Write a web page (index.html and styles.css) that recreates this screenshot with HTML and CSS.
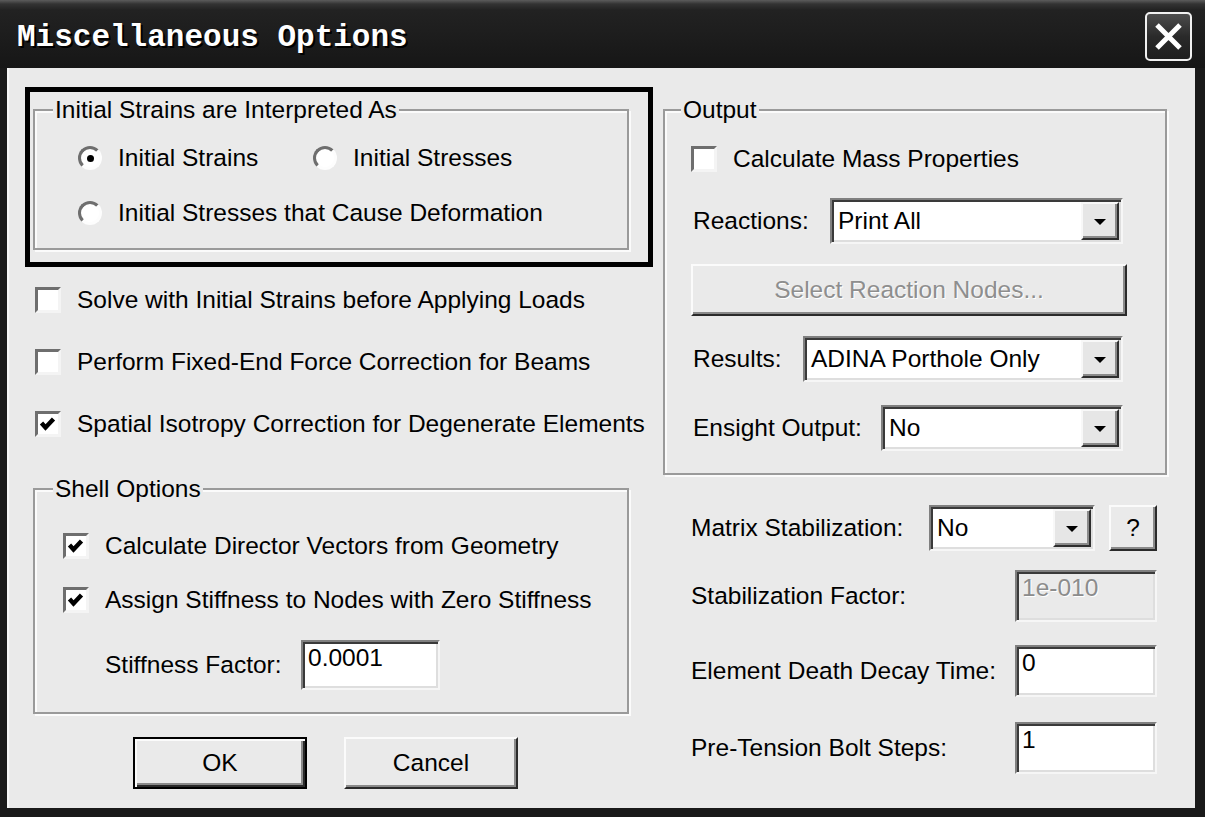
FILE: index.html
```html
<!DOCTYPE html>
<html>
<head>
<meta charset="utf-8">
<title>Miscellaneous Options</title>
<link rel="stylesheet" href="styles.css">
</head>
<body>
<div class="window">
  <div class="titlebar">
    <span class="title">Miscellaneous Options</span>
    <div class="close">
      <svg width="29" height="27" viewBox="0 0 29 27"><path d="M3 2 L26 25 M26 2 L3 25" stroke="#fff" stroke-width="5" fill="none"/></svg>
    </div>
  </div>
  <div class="dlg">
    <div class="col-left">
      <div class="focus">
        <fieldset class="group g-init">
          <legend>Initial Strains are Interpreted As</legend>
          <div class="init-in">
            <div class="radio-row">
              <div class="opt opt-first"><span class="radio on"></span><span>Initial Strains</span></div>
              <div class="opt"><span class="radio"></span><span>Initial Stresses</span></div>
            </div>
            <div class="radio-row">
              <div class="opt"><span class="radio"></span><span>Initial Stresses that Cause Deformation</span></div>
            </div>
          </div>
        </fieldset>
      </div>

      <div class="checks">
        <div class="check-row"><span class="check"></span><span>Solve with Initial Strains before Applying Loads</span></div>
        <div class="check-row"><span class="check"></span><span>Perform Fixed-End Force Correction for Beams</span></div>
        <div class="check-row"><span class="check"><svg class="tick" width="20" height="20" viewBox="0 0 20 20"><path d="M3.5 9 L7.5 13.5 L15.5 5" stroke="#000" stroke-width="4.4" fill="none"/></svg></span><span>Spatial Isotropy Correction for Degenerate Elements</span></div>
      </div>

      <fieldset class="group g-shell">
        <legend>Shell Options</legend>
        <div class="shell-in">
          <div class="check-row"><span class="check"><svg class="tick" width="20" height="20" viewBox="0 0 20 20"><path d="M3.5 9 L7.5 13.5 L15.5 5" stroke="#000" stroke-width="4.4" fill="none"/></svg></span><span>Calculate Director Vectors from Geometry</span></div>
          <div class="check-row"><span class="check"><svg class="tick" width="20" height="20" viewBox="0 0 20 20"><path d="M3.5 9 L7.5 13.5 L15.5 5" stroke="#000" stroke-width="4.4" fill="none"/></svg></span><span>Assign Stiffness to Nodes with Zero Stiffness</span></div>
          <div class="field-row stiff-row">
            <span class="stiff-label">Stiffness Factor:</span>
            <div class="field stiff-field">0.0001</div>
          </div>
        </div>
      </fieldset>

      <div class="buttons">
        <div class="btn btn-default">OK</div>
        <div class="btn">Cancel</div>
      </div>
    </div>

    <div class="col-right">
      <fieldset class="group g-output">
        <legend>Output</legend>
        <div class="output-in">
          <div class="check-row mass-row"><span class="check"></span><span>Calculate Mass Properties</span></div>
          <div class="combo-row reactions-row">
            <span class="lbl">Reactions:</span>
            <div class="combo w-reactions"><span class="combo-val">Print All</span><span class="combo-btn"></span></div>
          </div>
          <div class="btn btn-wide disabled">Select Reaction Nodes...</div>
          <div class="combo-row results-row">
            <span class="lbl">Results:</span>
            <div class="combo w-results"><span class="combo-val">ADINA Porthole Only</span><span class="combo-btn"></span></div>
          </div>
          <div class="combo-row ensight-row">
            <span class="lbl">Ensight Output:</span>
            <div class="combo w-ensight"><span class="combo-val">No</span><span class="combo-btn"></span></div>
          </div>
        </div>
      </fieldset>

      <div class="right-form">
        <div class="form-row matrix-row">
          <span class="lbl">Matrix Stabilization:</span>
          <div class="combo w-matrix"><span class="combo-val">No</span><span class="combo-btn"></span></div>
          <div class="btn btn-help">?</div>
        </div>
        <div class="form-row stab-row">
          <span class="lbl">Stabilization Factor:</span>
          <div class="field field-sm disabled-field">1e-010</div>
        </div>
        <div class="form-row death-row">
          <span class="lbl">Element Death Decay Time:</span>
          <div class="field field-sm">0</div>
        </div>
        <div class="form-row bolt-row">
          <span class="lbl">Pre-Tension Bolt Steps:</span>
          <div class="field field-sm">1</div>
        </div>
      </div>
    </div>
  </div>
</div>
</body>
</html>
```

FILE: styles.css
```css
* { box-sizing: border-box; }

html, body {
  margin: 0;
  padding: 0;
}

body {
  width: 1205px;
  height: 817px;
  overflow: hidden;
  background: #1a1a1a;
  font-family: "Liberation Sans", Arial, sans-serif;
  font-size: 24.5px;
  color: #000;
}

.window {
  width: 1205px;
  height: 817px;
  display: flex;
  flex-direction: column;
  background: #1a1a1a;
}

/* ---------- title bar ---------- */
.titlebar {
  height: 68px;
  flex: none;
  display: flex;
  align-items: center;
  justify-content: space-between;
  padding: 6px 13px 0 17px;
  background: linear-gradient(#5c5c5c 0, #333 4px, #222 10px, #1c1c1c 40px, #161616 68px);
}

.title {
  font-family: "Liberation Mono", "DejaVu Sans Mono", monospace;
  font-weight: bold;
  font-size: 31px;
  color: #fff;
  text-shadow: 2px 2px 0 #000;
  letter-spacing: 0;
}

.close {
  width: 47px;
  height: 49px;
  margin-top: -1px;
  border: 2px solid #f0f0f0;
  border-radius: 5px;
  background: linear-gradient(#4c4c4c, #2a2a2a 50%, #1e1e1e);
  display: flex;
  align-items: center;
  justify-content: center;
}

/* ---------- dialog body ---------- */
.dlg {
  flex: 1;
  margin: 0 10px 9px 7px;
  background: #eaeaea;
  border-left: 2px solid #f6f6f6;
  display: flex;
  gap: 10px;
  padding: 19px 0 0 16px;
}

.col-left {
  width: 628px;
  flex: none;
  display: flex;
  flex-direction: column;
}

.col-right {
  width: 505px;
  flex: none;
  display: flex;
  flex-direction: column;
}

/* ---------- group boxes ---------- */
.group {
  margin: 0;
  padding: 0;
  min-width: 0;
  border: 2px solid #9a9a9a;
  box-shadow: inset 2px 2px 0 #fbfbfb, 2px 2px 0 #fbfbfb;
}

.group legend {
  padding: 0 2px;
  line-height: 28px;
  height: 28px;
  background: #eaeaea;
}

.focus {
  width: 628px;
  height: 180px;
  border: 5px solid #000;
  padding: 4px 0 0 3px;
}

.g-init {
  width: 596px;
}

.g-init legend { margin-left: 18px; }

.init-in {
  padding: 20px 0 21px 43px;
  display: flex;
  flex-direction: column;
  gap: 27px;
}

.radio-row {
  display: flex;
  align-items: center;
  height: 28px;
}

.opt {
  display: flex;
  align-items: center;
  gap: 16px;
  white-space: nowrap;
}

.opt-first { width: 235px; }

.radio {
  width: 24px;
  height: 24px;
  border-radius: 50%;
  border: 3px solid;
  border-color: #6e6e6e #fdfdfd #fdfdfd #6e6e6e;
  background: #fff;
  display: flex;
  align-items: center;
  justify-content: center;
  flex: none;
}

.radio.on::after {
  content: "";
  width: 7px;
  height: 7px;
  border-radius: 50%;
  background: #000;
}

/* ---------- check boxes ---------- */
.checks {
  margin: 19px 0 0 10px;
  display: flex;
  flex-direction: column;
  gap: 34px;
}

.check-row {
  display: flex;
  align-items: center;
  gap: 16px;
  height: 28px;
  white-space: nowrap;
}

.check {
  width: 26px;
  height: 26px;
  flex: none;
  border: 3px solid;
  border-color: #6e6e6e #f4f4f4 #f4f4f4 #6e6e6e;
  background: #fff;
  display: flex;
  align-items: center;
  justify-content: center;
}

.tick { display: block; }

/* ---------- shell options ---------- */
.g-shell {
  width: 596px;
  margin: 37px 0 0 8px;
}

.g-shell legend { margin-left: 18px; }

.shell-in {
  padding: 29px 0 22px 28px;
  display: flex;
  flex-direction: column;
  gap: 26px;
}

.stiff-row {
  display: flex;
  align-items: center;
  padding-left: 42px;
}

.stiff-label {
  width: 196px;
  flex: none;
}

.stiff-field {
  width: 139px;
  height: 50px;
}

/* ---------- fields ---------- */
.field {
  background: #fff;
  border: 2px solid;
  border-color: #808080 #f6f6f6 #f6f6f6 #808080;
  box-shadow: inset 2px 2px 0 #3a3a3a, inset -2px -2px 0 #dedede;
  padding: 2px 4px 0 5px;
  line-height: 28px;
  white-space: nowrap;
}

.field-sm {
  width: 142px;
  height: 52px;
  margin-left: auto;
}

.disabled-field {
  background: #eaeaea;
  color: #8c8c8c;
  text-shadow: 1px 1px 0 #fff;
}

/* ---------- buttons ---------- */
.buttons {
  display: flex;
  gap: 37px;
  margin-top: 23px;
  padding-left: 108px;
}

.btn {
  width: 174px;
  height: 52px;
  background: #eaeaea;
  border: 2px solid;
  border-color: #fbfbfb #2a2a2a #2a2a2a #fbfbfb;
  box-shadow: inset -2px -2px 0 #8a8a8a;
  display: flex;
  align-items: center;
  justify-content: center;
  white-space: nowrap;
}

.btn-default {
  border: 2px solid #000;
  box-shadow: inset 2px 2px 0 #fbfbfb, inset -2px -2px 0 #2a2a2a, inset -4px -4px 0 #8a8a8a;
}

.btn-wide {
  width: 436px;
  margin-top: 20px;
}

.disabled {
  color: #8e8e8e;
  text-shadow: 1px 1px 0 #fff;
}

.btn-help {
  width: 48px;
  height: 46px;
  margin-left: 14px;
  flex: none;
}

/* ---------- output group ---------- */
.g-output {
  width: 504px;
  margin-top: 9px;
}

.g-output legend { margin-left: 16px; }

.output-in {
  padding: 21px 42px 22px 26px;
  display: flex;
  flex-direction: column;
}

.combo-row {
  display: flex;
  align-items: center;
  padding-left: 2px;
  white-space: nowrap;
}

.reactions-row { margin-top: 25px; }
.results-row { margin-top: 20px; }
.ensight-row { margin-top: 23px; }

.combo {
  height: 46px;
  margin-left: auto;
  display: flex;
  background: #fff;
  border: 2px solid;
  border-color: #808080 #f6f6f6 #f6f6f6 #808080;
  box-shadow: inset 2px 2px 0 #3a3a3a, inset -2px -2px 0 #dedede;
  padding: 2px;
  flex: none;
}

.combo-val {
  flex: 1;
  display: flex;
  align-items: center;
  padding-left: 4px;
  white-space: nowrap;
}

.combo-btn {
  width: 38px;
  flex: none;
  background: #e6e6e6;
  border: 2px solid;
  border-color: #f8f8f8 #2e2e2e #2e2e2e #f8f8f8;
  box-shadow: inset -2px -2px 0 #8a8a8a;
  display: flex;
  align-items: center;
  justify-content: center;
}

.combo-btn::after {
  content: "";
  border-left: 6px solid transparent;
  border-right: 6px solid transparent;
  border-top: 6px solid #000;
  margin-top: 2px;
}

.w-reactions { width: 293px; }
.w-results { width: 320px; }
.w-ensight { width: 242px; }
.w-matrix { width: 166px; }

/* ---------- right form ---------- */
.right-form {
  padding-left: 28px;
  width: 494px;
  margin-top: 30px;
  display: flex;
  flex-direction: column;
}

.form-row {
  display: flex;
  align-items: center;
  white-space: nowrap;
}

.stab-row { margin-top: 19px; }
.death-row { margin-top: 23px; }
.bolt-row { margin-top: 25px; }
```
